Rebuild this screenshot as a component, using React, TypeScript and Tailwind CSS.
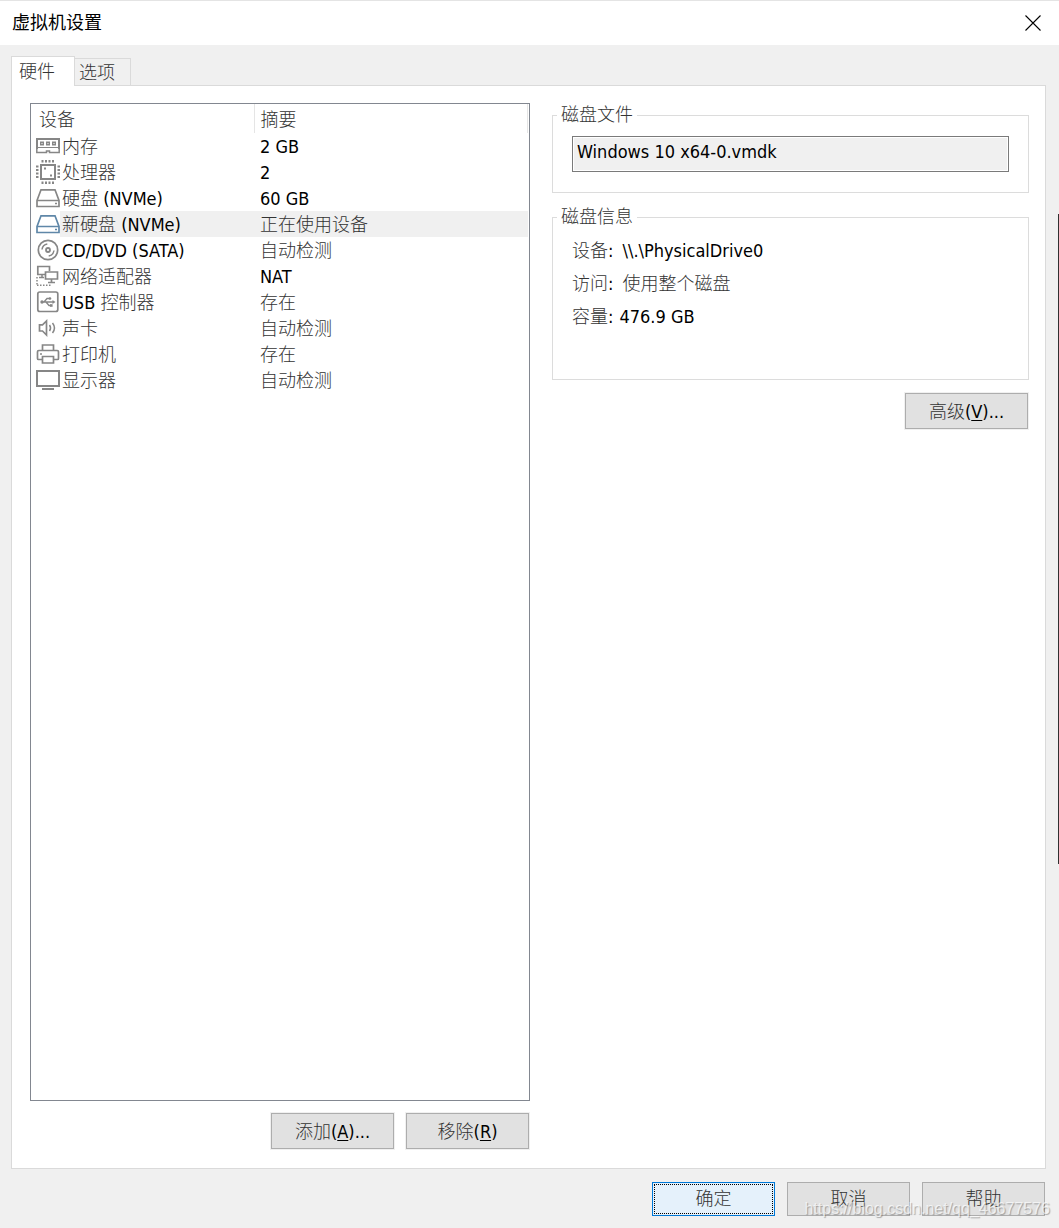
import React from "react";

const GRAY = "#868686";
const BLUE = "#5f87a8";

function Icon({ children, color = GRAY }: { children: React.ReactNode; color?: string }) {
  return (
    <svg
      className="block size-6 shrink-0"
      viewBox="0 0 24 24"
      fill="none"
      stroke={color}
      strokeWidth="2"
      aria-hidden="true"
    >
      {children}
    </svg>
  );
}

const MemoryIcon = () => (
  <Icon>
    <path d="M0 5h24M1 4v11M23 4v11" />
    <path d="M2 13.500h20" strokeWidth="1" />
    <path d="M4 7.500h4v4h-4zM10 7.500h4v4h-4zM16 7.500h4v4h-4z" fill={GRAY} stroke="none" />
    <path d="M5.500 9h1v1h-1zM11.500 9h1v1h-1zM17.500 9h1v1h-1z" fill="#fff" stroke="none" />
    <path d="M.8 14v4.500h9.700v-1.500h3v1.500h9.700V14" strokeWidth="1.500" />
  </Icon>
);

const CpuIcon = () => (
  <Icon>
    <rect x="5" y="5" width="14" height="14" />
    <path d="M6.500 0v2.500M10 0v2.500M13.500 0v2.500M17 0v2.500M6.500 21.500v2.500M10 21.500v2.500M13.500 21.500v2.500M17 21.500v2.500M0 6.500h2.500M0 10h2.500M0 13.500h2.500M0 17h2.500M21.500 6.500h2.500M21.500 10h2.500M21.500 13.500h2.500M21.500 17h2.500" />
    <path d="M8 8.500h2M14 15.500h2" />
  </Icon>
);

const DriveIcon = ({ color = GRAY }: { color?: string }) => (
  <Icon color={color}>
    <path d="M1 14.500L5 3.800h14l4 10.700v6H1z" strokeWidth="1.700" />
    <path d="M1 14.500h22" strokeWidth="1.500" />
    <path d="M19 17.500h2" strokeWidth="1.500" />
  </Icon>
);

const DiscIcon = () => (
  <Icon>
    <circle cx="12" cy="12" r="9.700" strokeWidth="1.700" />
    <circle cx="12" cy="12" r="2" strokeWidth="1.800" />
    <path d="M6 11.500c.4-3 2.400-5 5.300-5.500M18 12.500c-.4 3-2.400 5-5.300 5.500" strokeWidth="1.500" />
  </Icon>
);

const NetworkIcon = () => (
  <Icon>
    <path d="M9 10.500H1.800v-8h11.700v4.500" strokeWidth="1.700" />
    <path d="M9.500 8h12v7h-12zM15.500 15v3M12 18.500h7" strokeWidth="1.700" />
    <path d="M6 10.500v3M3 13.500h5" strokeWidth="1.500" />
    <path d="M1 21.200h14" strokeWidth="1.500" strokeDasharray="1.500 1.500" />
    <path d="M1 13v8" strokeWidth="1.500" strokeDasharray="1.500 1.500" />
  </Icon>
);

const UsbIcon = () => (
  <Icon>
    <rect x="1.800" y="2" width="20" height="19.500" rx="2" strokeWidth="1.700" />
    <path d="M6 12h11M8 12l3-3.500h3M10 12l3 3.500h2" strokeWidth="1.300" />
    <path d="M16.500 10l3 2-3 2z" fill={GRAY} stroke="none" />
    <circle cx="6" cy="12" r="1.700" fill={GRAY} stroke="none" />
    <circle cx="14" cy="8.500" r="1.300" fill={GRAY} stroke="none" />
    <path d="M14 14.200h2.600v2.600H14z" fill={GRAY} stroke="none" />
  </Icon>
);

const SoundIcon = () => (
  <Icon>
    <path d="M3.500 8.800h3L10.500 5v14l-4-4h-3z" strokeWidth="1.700" />
    <path d="M13.500 9c1.400 2 1.400 4 0 6M16.500 7c2.600 3.300 2.600 6.700 0 10" strokeWidth="1.500" />
  </Icon>
);

const PrinterIcon = () => (
  <Icon>
    <path d="M6.500 8V3h11v5M6 17.500H2.500c-.6 0-1-.4-1-1V9.800c0-.8.5-1.300 1.300-1.300h18.400c.8 0 1.300.5 1.300 1.300v6.700c0 .6-.4 1-1 1H18" strokeWidth="1.700" />
    <path d="M6.500 14.500h11V21h-11z" strokeWidth="1.700" />
    <path d="M4 12h2" strokeWidth="1.500" />
  </Icon>
);

const DisplayIcon = () => (
  <Icon>
    <rect x="1" y="3" width="22" height="15" />
    <path d="M6 21h12" />
  </Icon>
);

const devices = [
  { name: "内存", summary: "2 GB", icon: <MemoryIcon /> },
  { name: "处理器", summary: "2", icon: <CpuIcon /> },
  { name: "硬盘 (NVMe)", summary: "60 GB", icon: <DriveIcon /> },
  { name: "新硬盘 (NVMe)", summary: "正在使用设备", icon: <DriveIcon color={BLUE} />, selected: true },
  { name: "CD/DVD (SATA)", summary: "自动检测", icon: <DiscIcon /> },
  { name: "网络适配器", summary: "NAT", icon: <NetworkIcon /> },
  { name: "USB 控制器", summary: "存在", icon: <UsbIcon /> },
  { name: "声卡", summary: "自动检测", icon: <SoundIcon /> },
  { name: "打印机", summary: "存在", icon: <PrinterIcon /> },
  { name: "显示器", summary: "自动检测", icon: <DisplayIcon /> },
];

/** Sets Chinese runs lighter than the Latin text around them. */
function Text({ children }: { children: string }) {
  return (
    <>
      {children.split(/([\u4e00-\u9fff]+)/).map((part, i) =>
        i % 2 === 1 ? (
          <span key={i} className="leading-none font-light text-[#333333]">
            {part}
          </span>
        ) : (
          part
        ),
      )}
    </>
  );
}

function PushButton({ label, accessKey, suffix = "" }: { label: string; accessKey: string; suffix?: string }) {
  return (
    <button
      type="button"
      className="h-9 w-[123px] border border-[#adadad] bg-[#e1e1e1] pt-0.5 leading-6 outline outline-[#f0f0f0]"
    >
      <Text>{label}</Text>(<span className="underline underline-offset-2">{accessKey}</span>){suffix}
    </button>
  );
}

function Group({ title, className, children }: { title: string; className: string; children: React.ReactNode }) {
  return (
    <fieldset className={`min-w-0 border border-[#dcdcdc] px-[19px] ${className}`}>
      <legend className="-ml-[15px] px-1 leading-6">
        <Text>{title}</Text>
      </legend>
      {children}
    </fieldset>
  );
}

export default function App() {
  return (
    <div className="relative flex min-h-screen flex-col border-t border-[#e4e4e4] bg-[#f0f0f0] font-['DejaVu_Sans_Condensed','Noto_Sans','Noto_Sans_CJK_SC',sans-serif] text-[18px] text-black">
      <header className="flex h-11 items-center justify-between bg-white pr-[17px] pl-3">
        <h1 className="leading-6">虚拟机设置</h1>
        <button type="button" aria-label="关闭" className="p-px">
          <svg className="block size-4" viewBox="0 0 16 16" stroke="#000" strokeWidth="1.100" aria-hidden="true">
            <path d="M.5 .5l15 15M15.500 .5l-15 15" />
          </svg>
        </button>
      </header>

      <div role="tablist" className="flex items-end px-[11px] pt-[11px]">
        <button
          type="button"
          role="tab"
          aria-selected="true"
          className="z-10 -mb-px h-[30px] w-16 border border-b-0 border-[#dadada] bg-white pr-3 leading-6"
        >
          <Text>硬件</Text>
        </button>
        <button
          type="button"
          role="tab"
          aria-selected="false"
          className="h-[27px] w-14 border border-b-0 border-l-0 border-[#dadada] pt-px pr-[11px] leading-6"
        >
          <Text>选项</Text>
        </button>
      </div>

      <main className="mr-[13px] ml-[11px] flex grow gap-[22px] border border-[#dadada] bg-white pt-[17px] pr-4 pb-[19px] pl-[18px]">
        <section className="flex min-w-0 flex-[500] flex-col">
          <div className="grow border border-[#828790] pr-px">
            <table className="w-full table-fixed border-collapse">
              <thead>
                <tr className="h-[29px] text-left">
                  <th className="w-[223px] border-r border-[#e5e5e5] p-0 pt-0.5 pl-2 leading-6 font-normal">
                    <Text>设备</Text>
                  </th>
                  <th className="border-r border-[#e5e5e5] p-0 pt-0.5 pl-1.5 leading-6 font-normal">
                    <Text>摘要</Text>
                  </th>
                </tr>
              </thead>
              <tbody>
                {devices.map((d) => (
                  <tr key={d.name} className="h-[26px]">
                    <td className="p-0 pl-[5px]">
                      <div className="flex h-[26px] items-center">
                        {d.icon}
                        <span className={d.selected ? "grow bg-[#f0f0f0] pt-0.5 pl-0.5 leading-6" : "grow pt-0.5 pl-0.5 leading-6"}>
                          <Text>{d.name}</Text>
                        </span>
                      </div>
                    </td>
                    <td className={d.selected ? "bg-[#f0f0f0] p-0 pt-0.5 pl-1.5 leading-6" : "p-0 pt-0.5 pl-1.5 leading-6"}>
                      <Text>{d.summary}</Text>
                    </td>
                  </tr>
                ))}
              </tbody>
            </table>
          </div>
          <div className="mt-3 mr-px flex justify-end gap-3">
            <PushButton label="添加" accessKey="A" suffix="..." />
            <PushButton label="移除" accessKey="R" />
          </div>
        </section>

        <section className="flex min-w-0 flex-[477] flex-col gap-3">
          <Group title="磁盘文件" className="pt-[9px] pb-5">
            <input
              readOnly
              aria-label="磁盘文件"
              value="Windows 10 x64-0.vmdk"
              className="block h-9 w-full border border-[#7a7a7a] bg-[#f0f0f0] px-1 pb-1.5 leading-6 shadow-[inset_0_0_0_1px_#ffffff] outline-none"
            />
          </Group>
          <Group title="磁盘信息" className="pt-[5px] pb-[46px]">
            <dl className="leading-[33px]">
              <div className="flex gap-[9px]">
                <dt>
                  <Text>设备:</Text>
                </dt>
                <dd>{"\\\\.\\PhysicalDrive0"}</dd>
              </div>
              <div className="flex gap-[9px]">
                <dt>
                  <Text>访问:</Text>
                </dt>
                <dd>
                  <Text>使用整个磁盘</Text>
                </dd>
              </div>
              <div className="flex gap-[6px]">
                <dt>
                  <Text>容量:</Text>
                </dt>
                <dd>476.9 GB</dd>
              </div>
            </dl>
          </Group>
          <div className="m-px flex justify-end">
            <PushButton label="高级" accessKey="V" suffix="..." />
          </div>
        </section>
      </main>

      <footer className="flex justify-end gap-3 pt-[13px] pr-[14px] pb-3">
        <button type="button" className="h-[34px] w-[123px] border border-[#0078d7] bg-[#e5f1fb] p-px leading-6">
          <span className="flex h-full items-center justify-center border border-dotted border-black">
            <Text>确定</Text>
          </span>
        </button>
        <button type="button" className="h-[34px] w-[123px] border border-[#adadad] bg-[#e1e1e1] leading-6">
          <Text>取消</Text>
        </button>
        <button type="button" className="h-[34px] w-[123px] border border-[#adadad] bg-[#e1e1e1] leading-6">
          <Text>帮助</Text>
        </button>
      </footer>

      <div className="absolute top-[213px] right-0 h-[650px] w-px bg-[#303030]" />
      <p className="pointer-events-none absolute right-[9px] bottom-[9px] font-['Liberation_Sans',Arial,sans-serif] text-[16px] leading-5 text-white/70 [text-shadow:1px_1px_1px_rgba(0,0,0,0.3)]">
        https://blog.csdn.net/qq_46677576
      </p>
    </div>
  );
}
